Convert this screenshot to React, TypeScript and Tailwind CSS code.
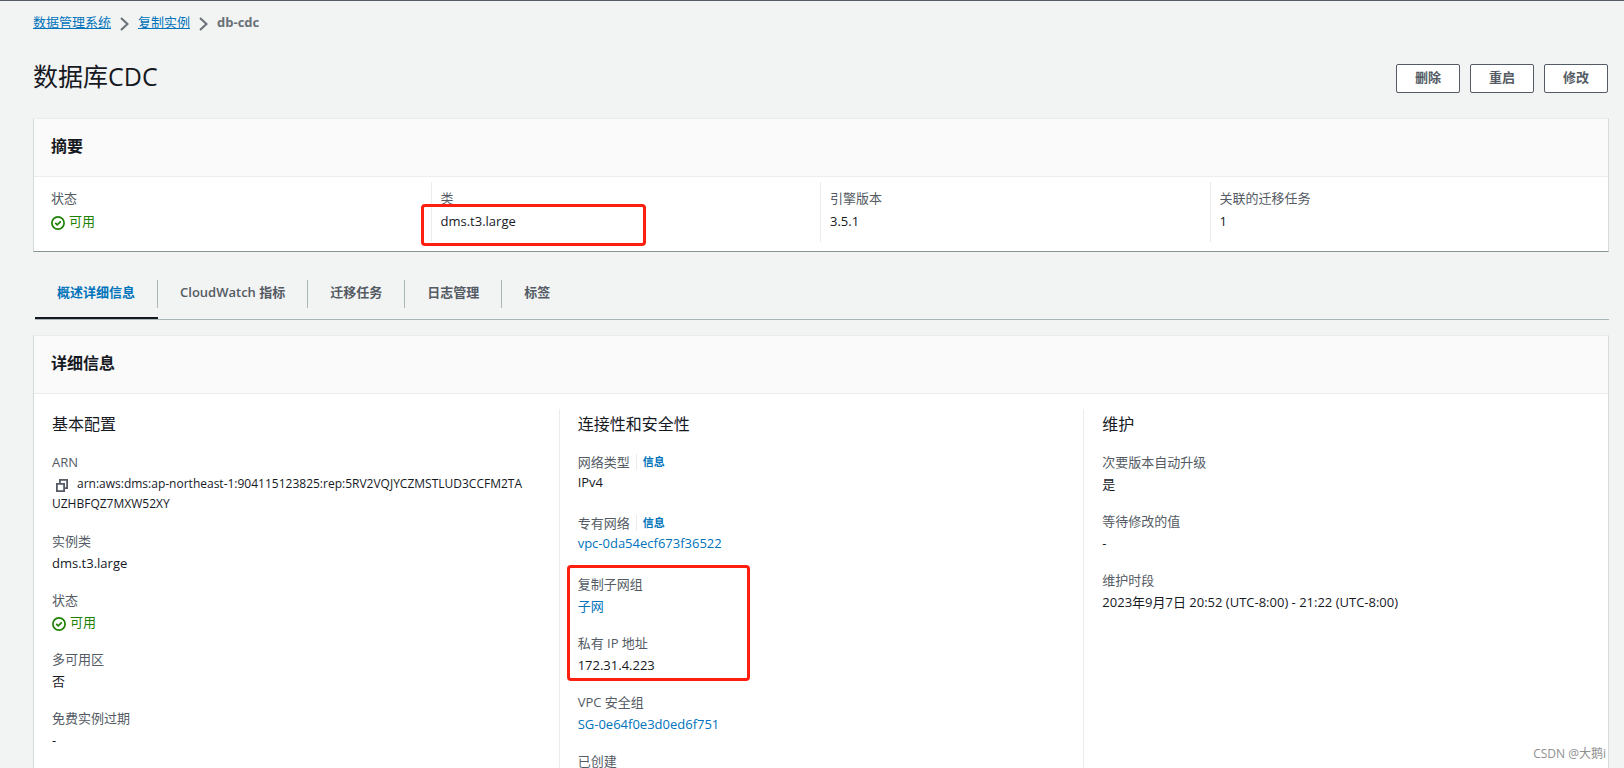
import type { ReactNode } from "react";

const breadcrumbs = ["数据管理系统", "复制实例"];

const actions = ["删除", "重启", "修改"];

const tabs = ["概述详细信息", "CloudWatch 指标", "迁移任务", "日志管理", "标签"];

function ChevronIcon() {
  return (
    <svg width="9" height="14" viewBox="0 0 9 14" fill="none" stroke="#687078" strokeWidth="2" className="mt-1" aria-hidden="true">
      <path d="M1 1l6.5 6L1 13" />
    </svg>
  );
}

function CopyIcon() {
  return (
    <svg width="12" height="13" viewBox="0 0 12 13" fill="none" stroke="#545b64" strokeWidth="1.8" aria-hidden="true">
      <path d="M.9 4.9h7.2v7.2H.9z" />
      <path d="M3.9 4V.9h7.2v8.2H9" />
    </svg>
  );
}

function StatusOk() {
  return (
    <span className="flex items-center gap-1 text-[#1d8102]">
      <svg width="14" height="14" viewBox="0 0 14 14" fill="none" stroke="currentColor" strokeWidth="1.7" className="mt-[3px]" aria-hidden="true">
        <circle cx="7" cy="7" r="6.1" />
        <path d="M4.2 6.8l2 2L9.8 5.4" />
      </svg>
      可用
    </span>
  );
}

function Link({ children }: { children: ReactNode }) {
  return (
    <a href="#" className="text-[#0073bb] hover:underline">
      {children}
    </a>
  );
}

function Panel({ title, children }: { title: string; children: ReactNode }) {
  return (
    <section className="border border-[#d5dbdb] border-t-[#eaeded] border-b-[#879596] bg-white">
      <header className="border-b border-[#eaeded] bg-[#fafafa] px-[17px] pt-[15px] pb-[17px]">
        <h2 className="text-base leading-[25px] font-semibold text-[#16191f]">{title}</h2>
      </header>
      {children}
    </section>
  );
}

function Field({ label, info, children }: { label: string; info?: boolean; children?: ReactNode }) {
  return (
    <div className={info ? "mb-[21px]" : "mb-[17px]"}>
      <dt className="flex items-center leading-5 text-[#545b64]">
        {label}
        {info && (
          <a href="#" className="ml-1.5 border-l border-[#eaeded] pl-1.5 text-[11px] leading-4 font-semibold text-[#0073bb]">
            信息
          </a>
        )}
      </dt>
      <dd className={info ? "leading-5 break-all" : "mt-0.5 leading-5 break-all"}>{children}</dd>
    </div>
  );
}

function SummaryItem({ label, marked, children }: { label: string; marked?: boolean; children: ReactNode }) {
  return (
    <div className="relative border-l border-[#eaeded] pt-[6px] pb-[11px] pl-[9px] first:border-transparent">
      <dt className="leading-5 text-[#545b64]">{label}</dt>
      <dd className="mt-[3px] leading-5">{children}</dd>
      {marked && <div className="absolute top-[22px] -left-[11px] h-[42px] w-[225px] rounded-sm border-3 border-[#ff1f10]" />}
    </div>
  );
}

function DetailColumn({ title, children }: { title: string; children: ReactNode }) {
  return (
    <div className="border-l border-[#eaeded] pt-[3px] pr-[17px] pl-[18px] first:border-l-0 first:pr-8">
      <h3 className="mb-4 text-base leading-6 text-[#16191f]">{title}</h3>
      <dl>{children}</dl>
    </div>
  );
}

export default function App() {
  return (
    <div className="relative h-screen overflow-hidden border-t border-[#545b64] bg-[#f2f3f3] pr-[15px] pl-[33px] font-['Open_Sans','Noto_Sans_CJK_SC',sans-serif] text-[13px] text-[#16191f]">
      <nav aria-label="breadcrumb" className="flex items-center gap-[9px] pt-[11px] leading-5">
        {breadcrumbs.map((item) => (
          <span key={item} className="flex items-center gap-[9px]">
            <a href="#" className="text-[#0073bb] underline">
              {item}
            </a>
            <ChevronIcon />
          </span>
        ))}
        <span className="font-bold text-[#687078]">db-cdc</span>
      </nav>

      <div className="mt-[29px] mb-[25px] flex items-start justify-between">
        <h1 className="text-[25px] leading-[30px]">数据库CDC</h1>
        <div className="mt-[3px] mr-px flex gap-2.5">
          {actions.map((action) => (
            <button
              key={action}
              type="button"
              className="rounded-xs border border-[#545b64] bg-white px-[18px] pb-[3px] text-[13px] leading-6 font-semibold text-[#545b64]"
            >
              {action}
            </button>
          ))}
        </div>
      </div>

      <Panel title="摘要">
        <dl className="grid grid-cols-4 pt-[5px] pr-[9px] pb-[9px] pl-[7px]">
          <SummaryItem label="状态">
            <StatusOk />
          </SummaryItem>
          <SummaryItem label="类" marked>
            dms.t3.large
          </SummaryItem>
          <SummaryItem label="引擎版本">3.5.1</SummaryItem>
          <SummaryItem label="关联的迁移任务">1</SummaryItem>
        </dl>
      </Panel>

      <div role="tablist" className="mt-7 mb-[15px] ml-0.5 flex border-b border-[#aab7b8]">
        {tabs.map((tab, i) => (
          <button
            key={tab}
            type="button"
            role="tab"
            aria-selected={i === 0}
            className={
              i === 0
                ? "border-b-2 border-[#16191f] pb-[9px] font-semibold text-[#0073bb]"
                : "border-b-2 border-transparent pb-[9px] font-semibold text-[#545b64]"
            }
          >
            <span
              className={
                i === tabs.length - 1
                  ? "block px-[22px] pb-1 leading-6"
                  : "block border-r border-[#aab7b8] px-[22px] pb-1 leading-6"
              }
            >
              {tab}
            </span>
          </button>
        ))}
      </div>

      <Panel title="详细信息">
        <div className="grid grid-cols-3 pt-[15px]">
          <DetailColumn title="基本配置">
            <Field label="ARN">
              <div className="text-xs leading-5">
                <button type="button" aria-label="复制 ARN" className="mt-[5px] mr-[9px] ml-1 align-top">
                  <CopyIcon />
                </button>
                arn:aws:dms:ap-northeast-1:904115123825:rep:5RV2VQJYCZMSTLUD3CCFM2TAUZHBFQZ7MXW52XY
              </div>
            </Field>
            <Field label="实例类">dms.t3.large</Field>
            <Field label="状态">
              <StatusOk />
            </Field>
            <Field label="多可用区">否</Field>
            <Field label="免费实例过期">-</Field>
          </DetailColumn>

          <DetailColumn title="连接性和安全性">
            <Field label="网络类型" info>
              IPv4
            </Field>
            <Field label="专有网络" info>
              <Link>vpc-0da54ecf673f36522</Link>
            </Field>
            <div className="relative">
              <Field label="复制子网组">
                <Link>子网</Link>
              </Field>
              <Field label="私有 IP 地址">172.31.4.223</Field>
              <div className="absolute -top-[9px] -left-[11px] h-[116px] w-[183px] rounded-sm border-3 border-[#ff1f10]" />
            </div>
            <Field label="VPC 安全组">
              <Link>SG-0e64f0e3d0ed6f751</Link>
            </Field>
            <Field label="已创建" />
          </DetailColumn>

          <DetailColumn title="维护">
            <Field label="次要版本自动升级">是</Field>
            <Field label="等待修改的值">-</Field>
            <Field label="维护时段">2023年9月7日 20:52 (UTC-8:00) - 21:22 (UTC-8:00)</Field>
          </DetailColumn>
        </div>
      </Panel>

      <div className="absolute right-[18px] bottom-1 text-xs leading-5 whitespace-nowrap text-[#8f8f8f]">
        CSDN @大鹅i
      </div>
    </div>
  );
}
